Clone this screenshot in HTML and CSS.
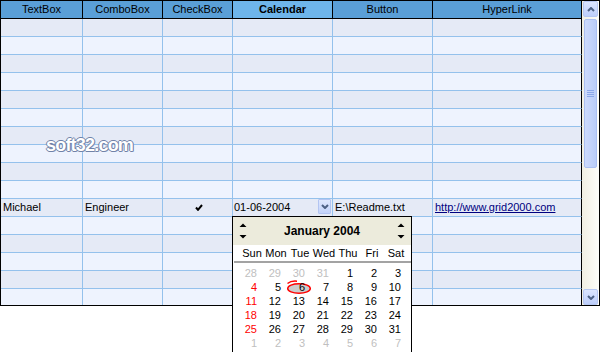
FILE: index.html
```html
<!DOCTYPE html>
<html lang="en">
<head>
    <meta charset="UTF-8">
    <title>Grid 2000 - Calendar Column</title>
    <link rel="stylesheet" href="styles.css">
</head>
<body>
    <div class="grid">
        <div class="sheet">
            <div class="row head">
                <div class="cell">TextBox</div>
                <div class="cell">ComboBox</div>
                <div class="cell">CheckBox</div>
                <div class="cell active">Calendar</div>
                <div class="cell">Button</div>
                <div class="cell">HyperLink</div>
            </div>
            <div class="rows">
                <div class="row"><div class="cell"></div><div class="cell"></div><div class="cell"></div><div class="cell"></div><div class="cell"></div><div class="cell"></div></div>
                <div class="row"><div class="cell"></div><div class="cell"></div><div class="cell"></div><div class="cell"></div><div class="cell"></div><div class="cell"></div></div>
                <div class="row"><div class="cell"></div><div class="cell"></div><div class="cell"></div><div class="cell"></div><div class="cell"></div><div class="cell"></div></div>
                <div class="row"><div class="cell"></div><div class="cell"></div><div class="cell"></div><div class="cell"></div><div class="cell"></div><div class="cell"></div></div>
                <div class="row"><div class="cell"></div><div class="cell"></div><div class="cell"></div><div class="cell"></div><div class="cell"></div><div class="cell"></div></div>
                <div class="row"><div class="cell"></div><div class="cell"></div><div class="cell"></div><div class="cell"></div><div class="cell"></div><div class="cell"></div></div>
                <div class="row"><div class="cell"></div><div class="cell"></div><div class="cell"></div><div class="cell"></div><div class="cell"></div><div class="cell"></div></div>
                <div class="row"><div class="cell"></div><div class="cell"></div><div class="cell"></div><div class="cell"></div><div class="cell"></div><div class="cell"></div></div>
                <div class="row"><div class="cell"></div><div class="cell"></div><div class="cell"></div><div class="cell"></div><div class="cell"></div><div class="cell"></div></div>
                <div class="row"><div class="cell"></div><div class="cell"></div><div class="cell"></div><div class="cell"></div><div class="cell"></div><div class="cell"></div></div>
                <div class="row">
                    <div class="cell">Michael</div>
                    <div class="cell">Engineer</div>
                    <div class="cell check">
                        <svg width="8" height="7" viewBox="0 0 8 7"><path d="M1 3.5 L3 5.8 L7 1" fill="none" stroke="#000" stroke-width="2"/></svg>
                    </div>
                    <div class="cell date">
                        <span>01-06-2004</span>
                        <span class="drop">
                            <svg width="8" height="5" viewBox="0 0 8 5"><path d="M1 1 L4 4 L7 1" fill="none" stroke="#4d6185" stroke-width="2"/></svg>
                        </span>
                    </div>
                    <div class="cell">E:\Readme.txt</div>
                    <div class="cell"><a href="#" class="link">http://www.grid2000.com</a></div>
                </div>
                <div class="row"><div class="cell"></div><div class="cell"></div><div class="cell"></div><div class="cell"></div><div class="cell"></div><div class="cell"></div></div>
                <div class="row"><div class="cell"></div><div class="cell"></div><div class="cell"></div><div class="cell"></div><div class="cell"></div><div class="cell"></div></div>
                <div class="row"><div class="cell"></div><div class="cell"></div><div class="cell"></div><div class="cell"></div><div class="cell"></div><div class="cell"></div></div>
                <div class="row"><div class="cell"></div><div class="cell"></div><div class="cell"></div><div class="cell"></div><div class="cell"></div><div class="cell"></div></div>
                <div class="row"><div class="cell"></div><div class="cell"></div><div class="cell"></div><div class="cell"></div><div class="cell"></div><div class="cell"></div></div>
            </div>
        </div>
        <div class="scroll">
            <div class="sbtn">
                <svg width="8" height="5" viewBox="0 0 8 5"><path d="M1 4 L4 1 L7 4" fill="none" stroke="#4d6185" stroke-width="2"/></svg>
            </div>
            <div class="thumb">
                <svg width="7" height="8" viewBox="0 0 7 8"><path d="M0 0.5 H7 M0 2.5 H7 M0 4.5 H7 M0 6.5 H7" stroke="#8ba7ea" stroke-width="1"/></svg>
            </div>
            <div class="track"></div>
            <div class="sbtn">
                <svg width="8" height="5" viewBox="0 0 8 5"><path d="M1 1 L4 4 L7 1" fill="none" stroke="#4d6185" stroke-width="2"/></svg>
            </div>
        </div>
    </div>

    <div class="mark">soft32.com</div>

    <div class="calendar">
        <div class="cal-head">
            <svg class="spin" width="8" height="16" viewBox="0 0 8 16"><path d="M0.5 4 L4 0.5 L7.5 4 Z M0.5 12 L4 15.5 L7.5 12 Z" fill="#000"/></svg>
            <div class="cal-title">January 2004</div>
            <svg class="spin" width="8" height="16" viewBox="0 0 8 16"><path d="M0.5 4 L4 0.5 L7.5 4 Z M0.5 12 L4 15.5 L7.5 12 Z" fill="#000"/></svg>
        </div>
        <div class="weekdays">
            <span>Sun</span><span>Mon</span><span>Tue</span><span>Wed</span><span>Thu</span><span>Fri</span><span>Sat</span>
        </div>
        <div class="rule"></div>
        <div class="days">
            <span class="other">28</span><span class="other">29</span><span class="other">30</span><span class="other">31</span><span>1</span><span>2</span><span>3</span>
            <span class="sun">4</span><span>5</span>
            <span class="today">
                <svg width="28" height="15" viewBox="0 0 28 15"><ellipse cx="14" cy="8.5" rx="11.3" ry="4.8" fill="#cdcdcd" stroke="#ff0000" stroke-width="1.5"/><path d="M2.5 3.5 Q6 0.6 12 1.2" fill="none" stroke="#ff0000" stroke-width="1.5"/></svg>
                <b>6</b>
            </span>
            <span>7</span><span>8</span><span>9</span><span>10</span>
            <span class="sun">11</span><span>12</span><span>13</span><span>14</span><span>15</span><span>16</span><span>17</span>
            <span class="sun">18</span><span>19</span><span>20</span><span>21</span><span>22</span><span>23</span><span>24</span>
            <span class="sun">25</span><span>26</span><span>27</span><span>28</span><span>29</span><span>30</span><span>31</span>
            <span class="other">1</span><span class="other">2</span><span class="other">3</span><span class="other">4</span><span class="other">5</span><span class="other">6</span><span class="other">7</span>
        </div>
    </div>
</body>
</html>
```

FILE: styles.css
```css
* {
    margin: 0;
    padding: 0;
    box-sizing: border-box;
}
body {
    font-family: 'Liberation Sans', Arial, sans-serif;
    font-size: 11px;
    background: white;
    color: black;
    position: relative;
    width: 600px;
    height: 352px;
    overflow: hidden;
}
.grid {
    display: flex;
    width: 600px;
    height: 306px;
    border: 1px solid black;
}
.sheet {
    width: 581px;
    overflow: hidden;
}
.row {
    display: grid;
    grid-template-columns: 82px 80px 70px 100px 100px 149px;
    height: 18px;
}
.cell {
    border-right: 1px solid #94c1ec;
    border-bottom: 1px solid #94c1ec;
    padding: 0 2px;
    line-height: 17px;
    white-space: nowrap;
    overflow: hidden;
}
.cell:last-child {
    border-right-color: black;
}
.head {
    background: #5a9fd7;
}
.head .cell {
    border-color: black;
    text-align: center;
}
.head .active {
    background: #6eb5ea;
    font-weight: bold;
}
.rows .row:nth-child(odd) {
    background: #e5eaf6;
}
.rows .row:nth-child(even) {
    background: #eef3fe;
}
.check {
    display: flex;
    align-items: center;
    justify-content: center;
    padding-left: 4px;
}
.date {
    display: flex;
    justify-content: space-between;
    padding: 0 0 0 1px;
}
.drop {
    width: 13px;
    height: 15px;
    margin: 0 1px 0 0;
    border: 1px solid #b3c5f2;
    border-radius: 1px;
    background: linear-gradient(#dfe8fe, #c3d3fa);
    display: flex;
    align-items: center;
    justify-content: center;
}
.link {
    color: #000080;
    text-decoration: underline;
}
.scroll {
    width: 17px;
    display: flex;
    flex-direction: column;
    padding: 0 1px;
    background: linear-gradient(to right, #f1efe3, #fdfdfa);
}
.sbtn {
    height: 16px;
    border: 1px solid #b6c7f3;
    border-radius: 2px;
    background: linear-gradient(#dbe5fe, #bdcefb);
    display: flex;
    align-items: center;
    justify-content: center;
}
.thumb {
    height: 149px;
    margin: 2px 1px 0;
    border: 1px solid #abc0f3;
    border-radius: 2px;
    background: linear-gradient(to right, #cddafc, #b9ccf9);
    display: flex;
    align-items: center;
    justify-content: center;
}
.track {
    flex: 1;
}
.mark {
    position: absolute;
    left: 46px;
    top: 136px;
    font-size: 18px;
    line-height: 18px;
    font-weight: bold;
    letter-spacing: -0.8px;
    color: white;
    text-shadow: 1px 0 #7082a8, -1px 0 #7082a8, 0 1px #7082a8, 0 -1px #7082a8, 1px 1px #9aa8c6;
}
.calendar {
    position: absolute;
    left: 232px;
    top: 216px;
    width: 180px;
    border: 1px solid black;
    background: white;
    padding-bottom: 3px;
}
.cal-head {
    height: 28px;
    background: #ecebdc;
    display: flex;
    align-items: center;
    padding: 0 6px;
}
.cal-title {
    flex: 1;
    text-align: center;
    font-size: 12px;
    font-weight: bold;
}
.weekdays {
    display: grid;
    grid-template-columns: repeat(7, 24px);
    margin-left: 7px;
    height: 16px;
    line-height: 16px;
    text-align: center;
}
.rule {
    height: 2px;
    margin-left: 1px;
    background: #a3a3a3;
}
.days {
    display: grid;
    grid-template-columns: repeat(7, 24px);
    margin-left: 7px;
    padding-top: 3px;
}
.days span {
    height: 14px;
    line-height: 14px;
    text-align: right;
    padding-right: 7px;
}
.days .other {
    color: #c0c0c0;
}
.days .sun {
    color: #ff0000;
}
.today {
    position: relative;
}
.today svg {
    position: absolute;
    left: -3px;
    top: 0;
}
.today b {
    position: relative;
    font-weight: normal;
}
```
